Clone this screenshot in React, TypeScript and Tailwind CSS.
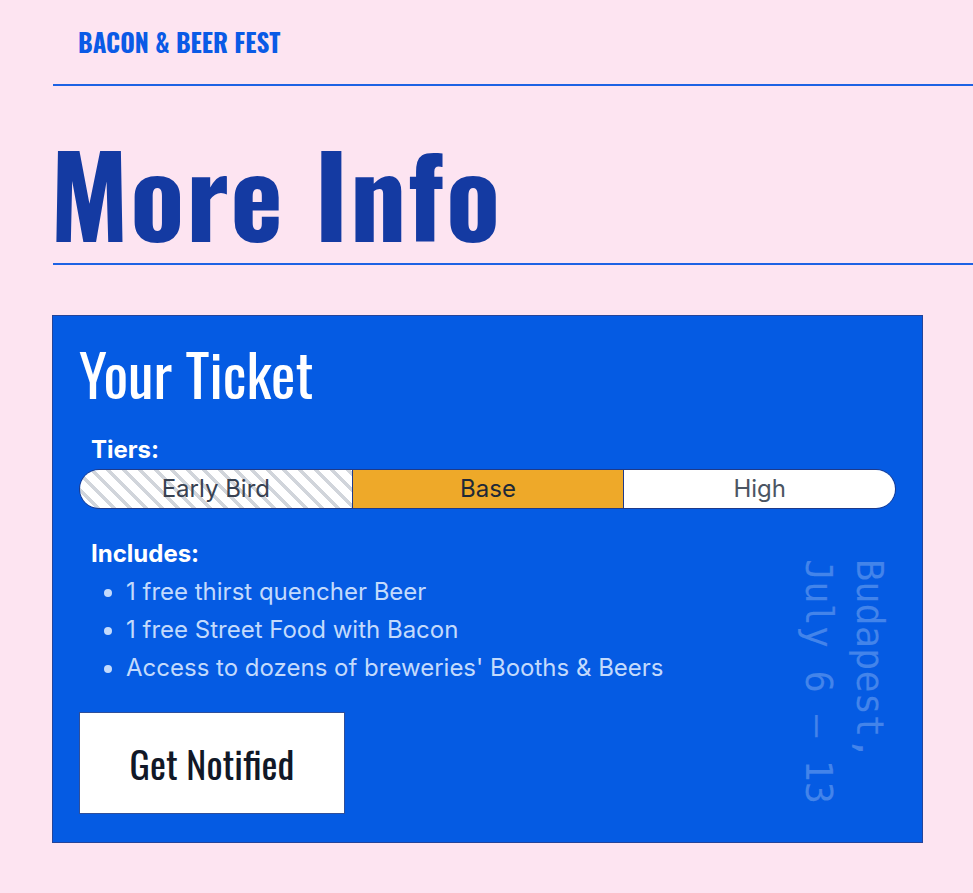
const includes = [
  "1 free thirst quencher Beer",
  "1 free Street Food with Bacon",
  "Access to dozens of breweries' Booths & Beers",
];

function TierBar() {
  return (
    <div className="grid grid-cols-3 h-10 rounded-full border border-[#1e3a8a] overflow-hidden text-[24px] font-['Inter',sans-serif]">
      <div className="flex items-center justify-center text-[#374151] bg-[repeating-linear-gradient(45deg,#d1d5db_0,#d1d5db_3.5px,#ffffff_3.5px,#ffffff_11.3px)]">
        Early Bird
      </div>
      <div className="flex items-center justify-center border-l border-[#1e3a8a] bg-[#eea929] text-[#1f2937]">Base</div>
      <div className="flex items-center justify-center border-l border-[#1e3a8a] bg-white text-[#4b5563]">High</div>
    </div>
  );
}

export default function App() {
  return (
    <div className="min-h-screen bg-[#fde4f1] pb-12 overflow-hidden">
      <header className="ml-[53px] h-[86px] border-b-2 border-[#1d62e4] pl-[25px] pt-[29px]">
        <span className="font-['Oswald',sans-serif] font-bold text-[25px] leading-none text-[#0a5ae6] uppercase">
          Bacon &amp; Beer Fest
        </span>
      </header>

      <h1 className="ml-[53px] mt-[49px] pb-[16px] border-b-2 border-[#1d62e4] indent-[-3px] font-['Oswald',sans-serif] font-bold text-[112px] leading-none tracking-[1.5px] text-[#143aa2]">
        More Info
      </h1>

      <section className="relative ml-[52px] mr-[50px] mt-[50px] border border-[#24449a] bg-[#055be3] px-[26px] pt-[26px] pb-[28px]">
        <h2 className="mt-[2px] font-['Oswald',sans-serif] font-normal text-[58px] leading-none text-white">Your Ticket</h2>

        <div className="mt-[36px] pl-3 font-['Inter',sans-serif] font-bold text-[24px] leading-none text-white">Tiers:</div>
        <div className="mt-[7px]">
          <TierBar />
        </div>

        <div className="mt-[33px] pl-3 font-['Inter',sans-serif] font-bold text-[24px] leading-none text-white">Includes:</div>
        <ul className="mt-[7px] pl-[47px] list-disc font-['Inter',sans-serif] text-[24px] leading-[38px] text-[#c3dafc]">
          {includes.map((item) => (
            <li key={item}>{item}</li>
          ))}
        </ul>

        <button className="mt-[25px] w-[266px] h-[102px] border border-[#2f4f9a] bg-white font-['Oswald',sans-serif] text-[38px] text-[#111827]">
          Get Notified
        </button>

        <div className="absolute right-[27px] top-[243px] [writing-mode:vertical-rl] font-['DejaVu_Sans_Mono',monospace] text-[37px] leading-[51px] text-white/25">
          <div>Budapest,</div>
          <div>July 6 – 13</div>
        </div>
      </section>
    </div>
  );
}
